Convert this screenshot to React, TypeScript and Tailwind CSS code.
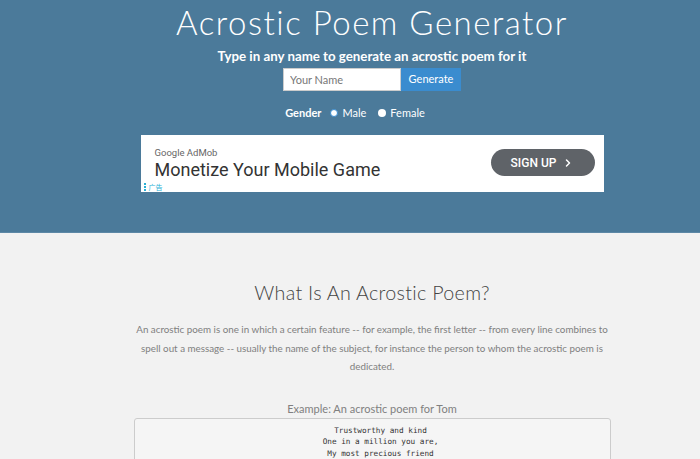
import { ChevronRight } from "lucide-react";

const App = () => {
  return (
    <div className="min-h-screen bg-[#f2f2f2] overflow-hidden" style={{ fontFamily: "Lato, 'Noto Sans', sans-serif" }}>
      <div className="bg-[#4b7a9a] h-[233px] border-b border-[#5d88a6] pl-[44px] flex flex-col items-center">
        <h1 className="text-white text-[33px] leading-[40px] font-light tracking-[1.5px] mt-[2px]">
          Acrostic Poem Generator
        </h1>
        <p className="text-white font-bold text-[13.3px] leading-[18px] mt-[5px]">
          Type in any name to generate an acrostic poem for it
        </p>
        <div className="flex mt-[3px]">
          <input
            type="text"
            placeholder="Your Name"
            className="w-[118px] h-[23px] bg-white border border-[#ccc] px-[6px] text-[11px] placeholder:text-[#777] outline-none"
          />
          <button type="button" className="w-[60px] h-[23px] bg-[#3a8ccf] text-white text-[11px]">
            Generate
          </button>
        </div>
        <div className="flex items-center text-white text-[11px] mt-[14px] gap-[4px] mr-[34px]">
          <span className="font-bold mr-[5px]">Gender</span>
          <span className="w-[8px] h-[8px] rounded-full bg-white border-[1.5px] border-[#3a8ccf]" />
          <span className="mr-[8px]">Male</span>
          <span className="w-[8px] h-[8px] rounded-full bg-white" />
          <span>Female</span>
        </div>
        <div className="w-[463px] h-[57px] bg-white mt-[13px] flex items-center relative" style={{ fontFamily: "Roboto, sans-serif" }}>
          <div className="flex flex-col pl-[14px] pt-[1px]">
            <span className="text-[9.5px] text-[#666] leading-[12px]">Google AdMob</span>
            <span className="text-[18px] text-[#333] leading-[22px]">Monetize Your Mobile Game</span>
          </div>
          <div className="ml-auto mr-[9px] w-[104px] h-[27px] rounded-full bg-[#5f6368] text-white text-[12px] font-medium flex items-center justify-center gap-[6px] mb-[1px]">
            SIGN UP
            <ChevronRight size={12} strokeWidth={3} />
          </div>
          <div className="absolute left-[3px] bottom-[1px] flex items-center gap-[3px] text-[#2ab0d6] text-[7px] leading-[8px]" style={{ fontFamily: "'Noto Sans CJK SC', sans-serif" }}>
            <span className="flex flex-col gap-[1px]">
              <span className="w-[2px] h-[2px] bg-[#2ab0d6]" />
              <span className="w-[2px] h-[2px] bg-[#2ab0d6]" />
              <span className="w-[2px] h-[2px] bg-[#2ab0d6]" />
            </span>
            广告
          </div>
        </div>
      </div>
      <div className="flex flex-col items-center pl-[44px]">
        <h2 className="text-[19.7px] font-light text-[#444] mt-[47px] leading-[26px] tracking-[0.3px]">
          What Is An Acrostic Poem?
        </h2>
        <p className="w-[480px] text-center text-[9.8px] leading-[18.5px] text-[#808080] mt-[14px]">
          An acrostic poem is one in which a certain feature -- for example, the first letter -- from every line combines to spell out a message -- usually the name of the subject, for instance the person to whom the acrostic poem is dedicated.
        </p>
        <p className="text-[11px] text-[#808080] mt-[26px] leading-[14px]">Example: An acrostic poem for Tom</p>
        <pre
          className="w-[477px] mt-[2px] bg-[#f5f5f5] border border-[#ccc] rounded-[3px] text-center text-[7.7px] leading-[11.5px] text-[#333] pt-[6px] pb-[8px] pl-[17px]"
          style={{ fontFamily: "'DejaVu Sans Mono', monospace" }}
        >
{`Trustworthy and kind
One in a million you are,
My most precious friend`}
        </pre>
      </div>
    </div>
  );
};

export default App;
